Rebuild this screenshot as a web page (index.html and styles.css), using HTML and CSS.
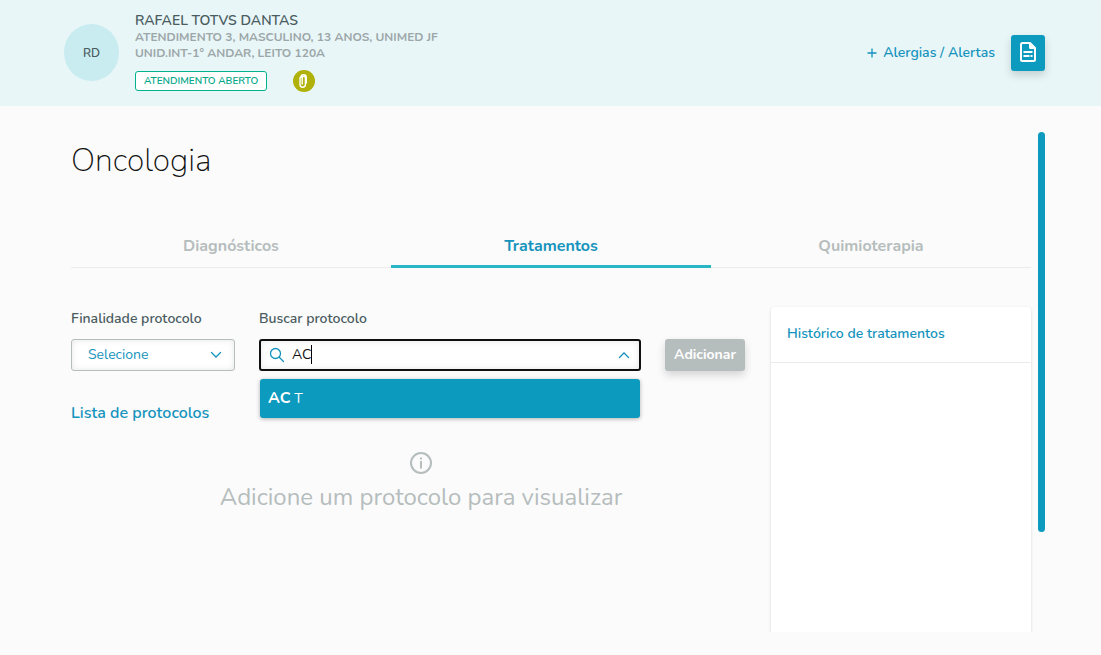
FILE: index.html
```html
<!DOCTYPE html>
<html lang="pt-BR">
<head>
    <meta charset="UTF-8">
    <meta name="viewport" content="width=device-width, initial-scale=1.0">
    <title>Oncologia</title>
    <link rel="stylesheet" href="styles.css">
</head>
<body>
    <header class="patient-header">
        <div class="avatar">RD</div>
        <div class="patient-info">
            <h2 class="patient-name">RAFAEL TOTVS DANTAS</h2>
            <p>ATENDIMENTO 3, MASCULINO, 13 ANOS, UNIMED JF</p>
            <p>UNID.INT-1° ANDAR, LEITO 120A</p>
            <div class="patient-tags">
                <span class="tag">ATENDIMENTO ABERTO</span>
                <button class="attach-btn" type="button" aria-label="Anexos">
                    <svg width="22" height="22" viewBox="0 0 22 22" fill="none" stroke="#fff" stroke-linecap="round">
                        <path stroke-width="1.400" d="M7 8v6.500a2.700 2.700 0 0 0 5.400 0M13.300 13V7.500a2.700 2.700 0 0 0-5.400 0M7 8.500a3 3 0 0 1 1-2M12.400 14.500V8a1.600 1.600 0 0 0-3.200 0v6"/>
                    </svg>
                </button>
            </div>
        </div>
        <div class="header-actions">
            <a href="#alergias" class="alert-link">
                <svg width="10" height="10" viewBox="0 0 10 10" stroke="currentColor" stroke-width="1.300"><path d="M5 .5v9M.5 5h9"/></svg>
                Alergias / Alertas
            </a>
            <button class="doc-btn" type="button" aria-label="Documento">
                <svg width="18" height="22" viewBox="0 0 18 22" fill="none" stroke="#fff" stroke-width="2" stroke-linejoin="round">
                    <path d="M3.500 1H11l5 5v11.500a1.500 1.500 0 0 1-1.500 1.500h-11A1.500 1.500 0 0 1 2 17.500V2.500A1.500 1.500 0 0 1 3.500 1z"/>
                    <path fill="#fff" stroke="none" d="M10 1l6 6h-4.500A1.500 1.500 0 0 1 10 5.500z"/>
                    <path d="M4.500 10h9M4.500 14h6M11.500 14h2"/>
                </svg>
            </button>
        </div>
    </header>

    <main class="page">
        <div class="content">
            <h1>Oncologia</h1>

            <nav class="tabs">
                <a href="#diagnosticos">Diagnósticos</a>
                <a href="#tratamentos" class="active">Tratamentos</a>
                <a href="#quimioterapia">Quimioterapia</a>
            </nav>

            <div class="columns">
                <section class="protocols">
                    <form class="protocol-form">
                        <div class="field">
                            <label for="finalidade">Finalidade protocolo</label>
                            <div class="select-box">
                                <select id="finalidade">
                                    <option>Selecione</option>
                                </select>
                                <svg class="chevron" width="12" height="8" viewBox="0 0 12 8"><path d="M1.500 1.500L6 6l4.500-4.500"/></svg>
                            </div>
                        </div>
                        <div class="field">
                            <label for="buscar">Buscar protocolo</label>
                            <div class="search-box">
                                <svg class="search-icon" width="16" height="16" viewBox="0 0 16 16"><circle cx="6.500" cy="6.500" r="5"/><path d="M10.200 10.200l4.300 4.300"/></svg>
                                <input id="buscar" type="text" value="AC" autocomplete="off">
                                <span class="caret"></span>
                                <svg class="chevron" width="12" height="8" viewBox="0 0 12 8"><path d="M1.500 6.500L6 2l4.500 4.500"/></svg>
                                <ul class="suggestions">
                                    <li><button type="button"><strong>AC</strong> T</button></li>
                                </ul>
                            </div>
                        </div>
                        <button class="add-btn" type="button">Adicionar</button>
                    </form>

                    <h3>Lista de protocolos</h3>

                    <div class="empty">
                        <svg width="24" height="24" viewBox="0 0 24 24" fill="none" stroke="currentColor" stroke-width="2">
                            <circle cx="12" cy="12" r="10"/>
                            <path d="M12 10v7.500M12 6.500v2"/>
                        </svg>
                        <p>Adicione um protocolo para visualizar</p>
                    </div>
                </section>

                <aside class="history">
                    <h4>Histórico de tratamentos</h4>
                </aside>
            </div>
        </div>
        <div class="scroll-track">
            <div class="scroll-thumb"></div>
        </div>
    </main>
</body>
</html>
```
FILE: styles.css
```css
:root {
    --primary-color: #0c9abe;
    --link-color: #1593bd;
    --text-color: #4a5c60;
    --text-secondary: #9da7a9;
    --muted-color: #b6bdbd;
    --line-color: #ebebeb;
    --bg-color: #fbfbfb;
    --shadow: 0 4px 8px rgba(0, 0, 0, 0.16);
}

* {
    box-sizing: border-box;
    margin: 0;
    padding: 0;
}

body {
    font-family: Nunito, Lato, sans-serif;
    font-size: 14px;
    line-height: 16px;
    color: var(--text-color);
    background-color: var(--bg-color);
    height: 100vh;
    display: flex;
    flex-direction: column;
}

button,
input,
select {
    font: inherit;
    border: none;
}

button {
    cursor: pointer;
}

a {
    text-decoration: none;
}

svg {
    flex: none;
}

/* Patient header */
.patient-header {
    display: flex;
    align-items: center;
    gap: 16px;
    padding: 13px 56px 14px 64px;
    background-color: #e8f6f8;
}

.avatar {
    display: flex;
    align-items: center;
    justify-content: center;
    width: 55px;
    height: 57px;
    border-radius: 50%;
    background-color: #c9ecf0;
    font-size: 12px;
    font-weight: 600;
}

.patient-info {
    flex: 1;
}

.patient-info p {
    font-size: 12px;
    font-weight: 700;
    color: var(--text-secondary);
}

.patient-name {
    font-size: 14px;
    font-weight: 600;
}

.patient-tags {
    display: flex;
    align-items: center;
    gap: 26px;
    margin-top: 9px;
}

.tag {
    padding: 1px 8px;
    border: 1px solid #00b28e;
    border-radius: 3px;
    background-color: #fff;
    color: #00a688;
    font-size: 10px;
    font-weight: 600;
}

.attach-btn {
    display: flex;
    width: 22px;
    height: 22px;
    border-radius: 50%;
    background-color: #b0b10a;
}

.header-actions {
    display: flex;
    align-items: center;
    gap: 16px;
}

.alert-link {
    display: flex;
    align-items: center;
    gap: 6px;
    color: var(--link-color);
    font-weight: 600;
}

.doc-btn {
    display: flex;
    align-items: center;
    justify-content: center;
    width: 34px;
    height: 36px;
    border-radius: 3px;
    background-color: var(--primary-color);
    box-shadow: var(--shadow);
}

/* Page */
.page {
    flex: 1;
    min-height: 0;
    display: flex;
    padding: 26px 56px 23px 64px;
}

.content {
    flex: 1;
    min-width: 0;
    padding: 9px 7px 0 7px;
    overflow-y: auto;
    scrollbar-width: none;
}

.scroll-track {
    width: 7px;
}

.scroll-thumb {
    height: 80%;
    border-radius: 4px;
    background-color: var(--primary-color);
}

h1 {
    font-size: 32px;
    line-height: 40px;
    font-weight: 200;
    color: #111;
}

.tabs {
    display: grid;
    grid-template-columns: repeat(3, 1fr);
    margin-top: 43px;
    border-bottom: 1px solid var(--line-color);
}

.tabs a {
    padding: 11px 0 8px;
    margin-bottom: -1px;
    border-bottom: 3px solid transparent;
    color: var(--muted-color);
    font-size: 16px;
    line-height: 22px;
    font-weight: 700;
    text-align: center;
}

.tabs .active {
    color: var(--link-color);
    border-bottom-color: #29b6c5;
}

.columns {
    display: grid;
    grid-template-columns: minmax(0, 1fr) 260px;
    padding-top: 39px;
}

.protocol-form {
    display: grid;
    grid-template-columns: 164px minmax(0, 1fr) 80px;
    gap: 24px;
    align-items: end;
    padding: 4px 26px 0 0;
}

.field label {
    display: block;
    margin-bottom: 12px;
    font-weight: 600;
}

.select-box,
.search-box {
    position: relative;
    display: flex;
    align-items: center;
    height: 32px;
    border-radius: 3px;
    background-color: #fff;
    color: var(--link-color);
    box-shadow: inset 0 0 6px rgba(0, 0, 0, 0.1);
}

.select-box {
    border: 1px solid var(--muted-color);
}

.select-box select {
    width: 100%;
    height: 100%;
    padding: 0 16px;
    background: none;
    color: inherit;
    appearance: none;
    outline: none;
}

.select-box .chevron {
    position: absolute;
    right: 12px;
    pointer-events: none;
}

.chevron,
.search-icon {
    fill: none;
    stroke: currentColor;
    stroke-width: 1.3;
    stroke-linecap: round;
}

.search-box {
    gap: 7px;
    padding: 0 9px 0 8px;
    border: 2px solid #101010;
}

.search-box input {
    flex: 1;
    min-width: 0;
    background: none;
    color: #111;
    caret-color: transparent;
    outline: none;
}

/* Text cursor after the typed term */
.caret {
    position: absolute;
    top: 4px;
    left: 50px;
    width: 1px;
    height: 19px;
    background-color: #000;
}

.suggestions {
    position: absolute;
    top: 38px;
    left: -1px;
    right: -1px;
    list-style: none;
}

.suggestions button {
    width: 100%;
    height: 39px;
    padding: 0 8px;
    border-radius: 3px;
    background-color: var(--primary-color);
    box-shadow: 0 1px 4px rgba(0, 0, 0, 0.3);
    color: #fff;
    text-align: left;
}

.suggestions strong {
    font-size: 16px;
}

.add-btn {
    height: 32px;
    border-radius: 3px;
    background-color: var(--muted-color);
    box-shadow: var(--shadow);
    color: #fff;
    font-weight: 700;
}

h3 {
    margin-top: 32px;
    color: var(--link-color);
    font-size: 16px;
    line-height: 20px;
    font-weight: 600;
}

.empty {
    display: flex;
    flex-direction: column;
    align-items: center;
    gap: 6px;
    margin-top: 28px;
    color: var(--muted-color);
}

.empty p {
    font-size: 24px;
    line-height: 32px;
}

.history {
    min-height: 451px;
    border-radius: 4px;
    background-color: #fff;
    box-shadow: 0 1px 3px rgba(0, 0, 0, 0.16);
}

.history h4 {
    padding: 19px 16px 20px;
    border-bottom: 1px solid var(--line-color);
    color: var(--link-color);
    font-weight: 600;
}
```
